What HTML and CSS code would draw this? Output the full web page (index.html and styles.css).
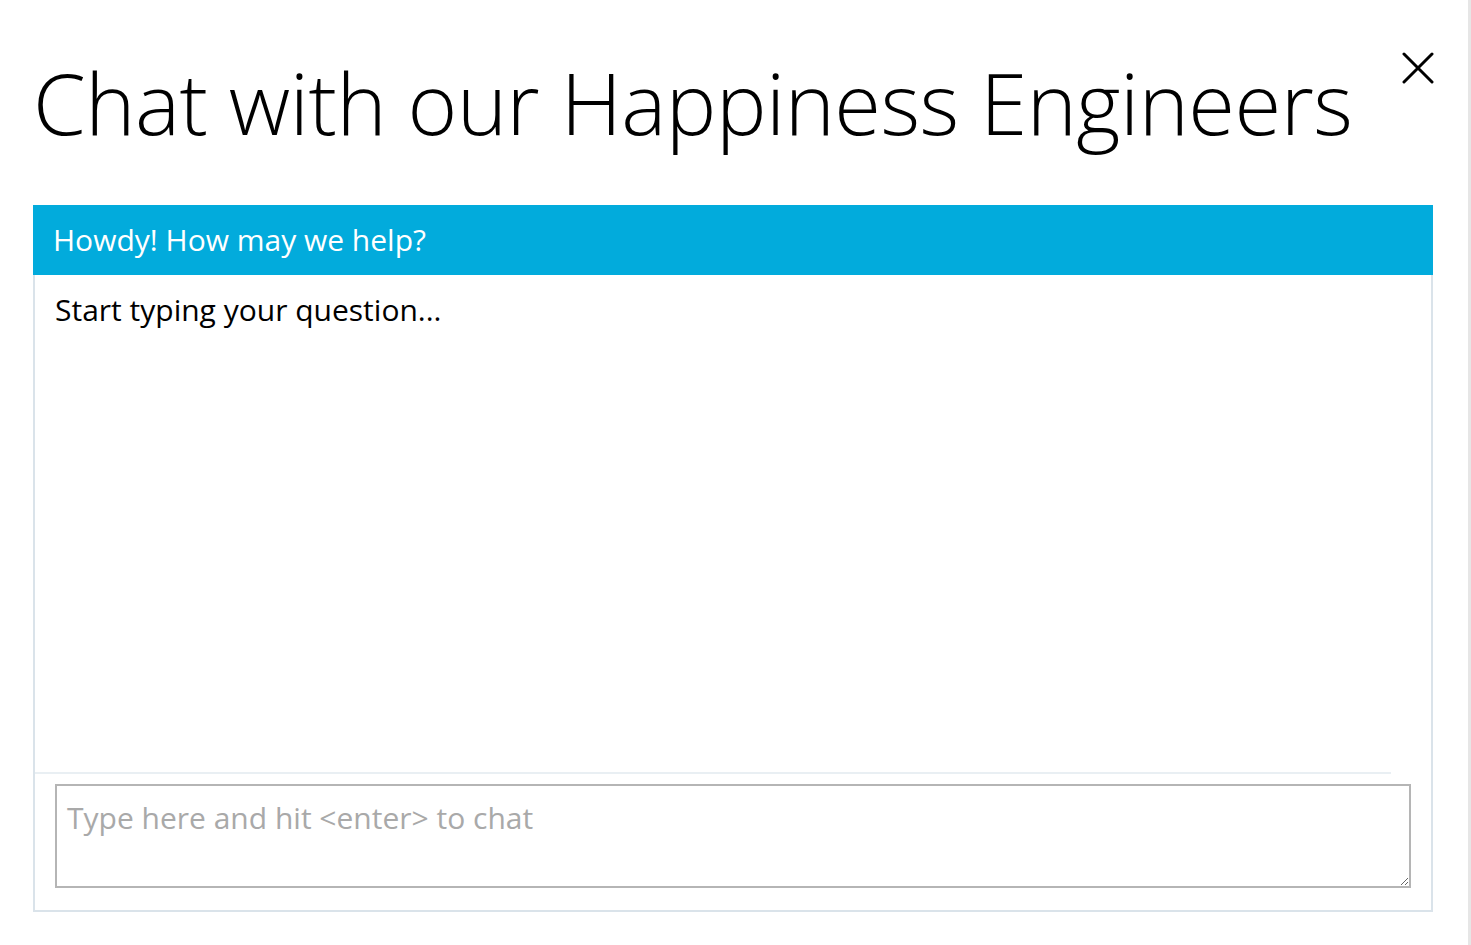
FILE: index.html
```html
<!DOCTYPE html>
<html>
<head>
<meta charset="utf-8">
<link rel="stylesheet" href="styles.css">
</head>
<body>
<div class="page">
  <div class="content">
    <div class="top">
      <h1 class="title">Chat with our Happiness Engineers</h1>
      <button class="close" aria-label="Close">
        <svg width="32" height="32" viewBox="0 0 32 32"><path d="M2 2 L30 30 M30 2 L2 30" stroke="#000" stroke-width="3" stroke-linecap="round" fill="none"/></svg>
      </button>
    </div>
    <div class="panel">
      <div class="panel-head">Howdy! How may we help?</div>
      <div class="panel-body">
        <div class="messages">Start typing your question...</div>
        <div class="composer">
          <textarea class="input" placeholder="Type here and hit <enter> to chat"></textarea>
        </div>
      </div>
    </div>
  </div>
  <div class="strip"></div>
</div>
</body>
</html>
```

FILE: styles.css
```css
html, body {
  margin: 0;
  padding: 0;
  background: #fff;
  height: 100%;
}
body {
  font-family: "Open Sans", "Liberation Sans", sans-serif;
  color: #000;
}
.page {
  display: flex;
  height: 945px;
}
.content {
  flex: 1;
  padding: 0 35px 0 33px;
}
.strip {
  width: 3px;
  background: #e6e6e6;
}
.top {
  display: flex;
  justify-content: space-between;
  align-items: flex-start;
  height: 205px;
}
.title {
  margin: 42px 0 0 0;
  font-weight: 300;
  font-size: 85px;
  line-height: 120px;
  letter-spacing: -0.52px;
  white-space: nowrap;
}
.close {
  margin-top: 52px;
  padding: 0;
  border: 0;
  background: none;
  width: 32px;
  height: 32px;
  margin-right: -1px;
}
.close svg { display: block; }
.panel {
  width: 1400px;
}
.panel-head {
  background: #02abdc;
  color: #fff;
  height: 70px;
  line-height: 70px;
  padding-left: 20px;
  font-size: 30px;
  font-weight: 400;
  letter-spacing: 0;
}
.panel-body {
  border: 2px solid #dae3ea;
  border-top: 0;
  display: flex;
  flex-direction: column;
  height: 635px;
}
.messages {
  flex: 1;
  padding: 15px 20px 0 20px;
  font-size: 30px;
  line-height: 40px;
  border-bottom: 2px solid #e9eff3;
  margin-right: 40px;
}
.composer {
  padding: 10px 20px 22px 20px;
}
.input {
  display: block;
  box-sizing: border-box;
  width: 1356px;
  height: 104px;
  border: 2px solid #b5b5b5;
  padding: 12px 10px 10px 10px;
  font-family: "Open Sans", "Liberation Sans", sans-serif;
  font-size: 30px;
  line-height: 40px;
  resize: vertical;
  margin: 0;
  outline: none;
}
.input::placeholder {
  color: #a9a9a9;
}
```
